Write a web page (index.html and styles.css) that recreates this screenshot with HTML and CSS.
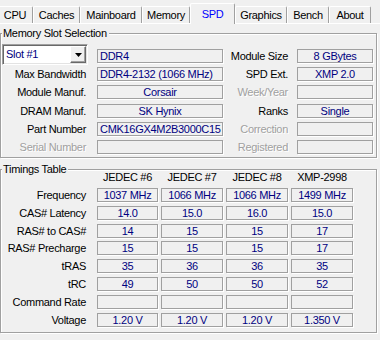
FILE: index.html
```html
<!DOCTYPE html>
<html>
<head>
<meta charset="utf-8">
<title>CPU-Z SPD</title>
<link rel="stylesheet" href="styles.css">
</head>
<body>
<div class="window">
  <nav class="tabs">
    <div class="tab t-cpu">CPU</div>
    <div class="tab t-caches">Caches</div>
    <div class="tab t-mainboard">Mainboard</div>
    <div class="tab t-memory">Memory</div>
    <div class="tab t-spd active">SPD</div>
    <div class="tab t-graphics">Graphics</div>
    <div class="tab t-bench">Bench</div>
    <div class="tab t-about">About</div>
  </nav>
  <div class="page">
    <section class="group group-slot">
      <span class="legend">Memory Slot Selection</span>
      <div class="slot-grid">
        <div class="select">
          <span class="select-value">Slot #1</span>
          <span class="select-btn"><svg width="7" height="4" viewBox="0 0 7 4"><polygon points="0,0 7,0 3.5,4" fill="#000"/></svg></span>
        </div>
        <div class="field left">DDR4</div>
        <div class="label label-r">Module Size</div>
        <div class="field">8 GBytes</div>

        <div class="label label-l">Max Bandwidth</div>
        <div class="field left">DDR4-2132 (1066 MHz)</div>
        <div class="label label-r">SPD Ext.</div>
        <div class="field">XMP 2.0</div>

        <div class="label label-l">Module Manuf.</div>
        <div class="field">Corsair</div>
        <div class="label label-r disabled">Week/Year</div>
        <div class="field"></div>

        <div class="label label-l">DRAM Manuf.</div>
        <div class="field">SK Hynix</div>
        <div class="label label-r">Ranks</div>
        <div class="field">Single</div>

        <div class="label label-l">Part Number</div>
        <div class="field left">CMK16GX4M2B3000C15</div>
        <div class="label label-r disabled">Correction</div>
        <div class="field"></div>

        <div class="label label-l disabled">Serial Number</div>
        <div class="field"></div>
        <div class="label label-r disabled">Registered</div>
        <div class="field"></div>
      </div>
    </section>

    <section class="group group-timings">
      <span class="legend">Timings Table</span>
      <div class="timing-grid">
        <div></div>
        <div class="head">JEDEC #6</div>
        <div class="head">JEDEC #7</div>
        <div class="head">JEDEC #8</div>
        <div class="head">XMP-2998</div>

        <div class="label">Frequency</div>
        <div class="field">1037 MHz</div>
        <div class="field">1066 MHz</div>
        <div class="field">1066 MHz</div>
        <div class="field">1499 MHz</div>

        <div class="label">CAS# Latency</div>
        <div class="field">14.0</div>
        <div class="field">15.0</div>
        <div class="field">16.0</div>
        <div class="field">15.0</div>

        <div class="label">RAS# to CAS#</div>
        <div class="field">14</div>
        <div class="field">15</div>
        <div class="field">15</div>
        <div class="field">17</div>

        <div class="label">RAS# Precharge</div>
        <div class="field">15</div>
        <div class="field">15</div>
        <div class="field">15</div>
        <div class="field">17</div>

        <div class="label">tRAS</div>
        <div class="field">35</div>
        <div class="field">36</div>
        <div class="field">36</div>
        <div class="field">35</div>

        <div class="label">tRC</div>
        <div class="field">49</div>
        <div class="field">50</div>
        <div class="field">50</div>
        <div class="field">52</div>

        <div class="label">Command Rate</div>
        <div class="field"></div>
        <div class="field"></div>
        <div class="field"></div>
        <div class="field"></div>

        <div class="label">Voltage</div>
        <div class="field">1.20 V</div>
        <div class="field">1.20 V</div>
        <div class="field">1.20 V</div>
        <div class="field">1.350 V</div>
      </div>
    </section>
  </div>
</div>
</body>
</html>
```

FILE: styles.css
```css
* { box-sizing: border-box; }

html, body { margin: 0; padding: 0; }

body {
  width: 380px;
  height: 340px;
  overflow: hidden;
  background: #f0f0f0;
  font-family: "Liberation Sans", Arial, sans-serif;
  font-size: 11px;
  letter-spacing: -0.3px;
  color: #000;
}

/* ---------- tabs ---------- */
.tabs {
  display: flex;
  align-items: flex-end;
  height: 23px;
  margin-left: -3px;
}

.tab {
  height: 17px;
  padding-top: 1px;
  line-height: 15px;
  text-align: center;
  white-space: nowrap;
  border-top: 1px solid #fff;
  border-left: 1px solid #fff;
  border-right: 1px solid #a0a0a0;
  border-radius: 2px 2px 0 0;
  background: #f0f0f0;
}

.tab.active {
  position: relative;
  z-index: 1;
  height: 21px;
  margin-bottom: -1px;
  padding-top: 1px;
  line-height: 18px;
  color: #0000ff;
}

.t-cpu { width: 36px; }
.t-caches { width: 47px; }
.t-mainboard { width: 62px; }
.t-memory { width: 48px; }
.t-spd { width: 45px; }
.t-graphics { width: 52px; }
.t-bench { width: 42px; }
.t-about { width: 42px; }

/* ---------- page ---------- */
.page {
  border-top: 1px solid #fff;
  padding-top: 9px;
}

.group {
  position: relative;
  width: 377px;
  border: 1px solid #a0a0a0;
  box-shadow: inset 1px 1px 0 #fff, 1px 1px 0 #fff;
}

.legend {
  position: absolute;
  top: -7px;
  left: 1px;
  padding: 0 2px 0 1px;
  line-height: 13px;
  background: #f0f0f0;
}

.group-slot {
  padding: 15px 2px 3px 2px;
}

.group-timings {
  margin-top: 11px;
  padding: 0 2px 5px 2px;
}

/* ---------- fields ---------- */
.field {
  height: 14px;
  border: 1px solid #a0a0a0;
  box-shadow: 1px 1px 0 #fff;
  color: #000080;
  text-align: center;
  line-height: 12px;
  white-space: nowrap;
  overflow: hidden;
}

.field.left {
  text-align: left;
  padding-left: 2px;
}

.label {
  text-align: right;
  line-height: 14px;
  white-space: nowrap;
}

.label.disabled {
  color: #a0a0a0;
  text-shadow: 1px 1px 0 #fff;
}

/* ---------- slot grid ---------- */
.slot-grid {
  display: grid;
  grid-template-columns: 94px 126px 74px 76px;
  grid-template-rows: repeat(6, 14px);
  row-gap: 4.2px;
}

.label-l { padding-right: 11px; }
.label-r { padding-right: 9px; }

.select {
  align-self: start;
  width: 86px;
  height: 21px;
  margin: -5px 0 0 -1px;
  display: flex;
  background: #fff;
  border: 1px solid;
  border-color: #a0a0a0 #fff #fff #a0a0a0;
  box-shadow: inset 1px 1px 0 #696969, inset -1px -1px 0 #e3e3e3;
  padding: 1px;
}

.select-value {
  flex: 1;
  color: #000080;
  line-height: 17px;
  padding-left: 2px;
}

.select-btn {
  width: 16px;
  height: 17px;
  display: flex;
  align-items: center;
  justify-content: center;
  background: #f0f0f0;
  border: 1px solid;
  border-color: #fff #696969 #696969 #fff;
  box-shadow: inset -1px -1px 0 #a0a0a0;
}

/* ---------- timings grid ---------- */
.timing-grid {
  display: grid;
  grid-template-columns: 91px 61px 62px 62px 62px;
  grid-template-rows: repeat(9, 14px);
  column-gap: 3px;
  row-gap: 3.86px;
}

.timing-grid .label { padding-right: 8px; }

.head {
  text-align: center;
  line-height: 14px;
  white-space: nowrap;
}
```
